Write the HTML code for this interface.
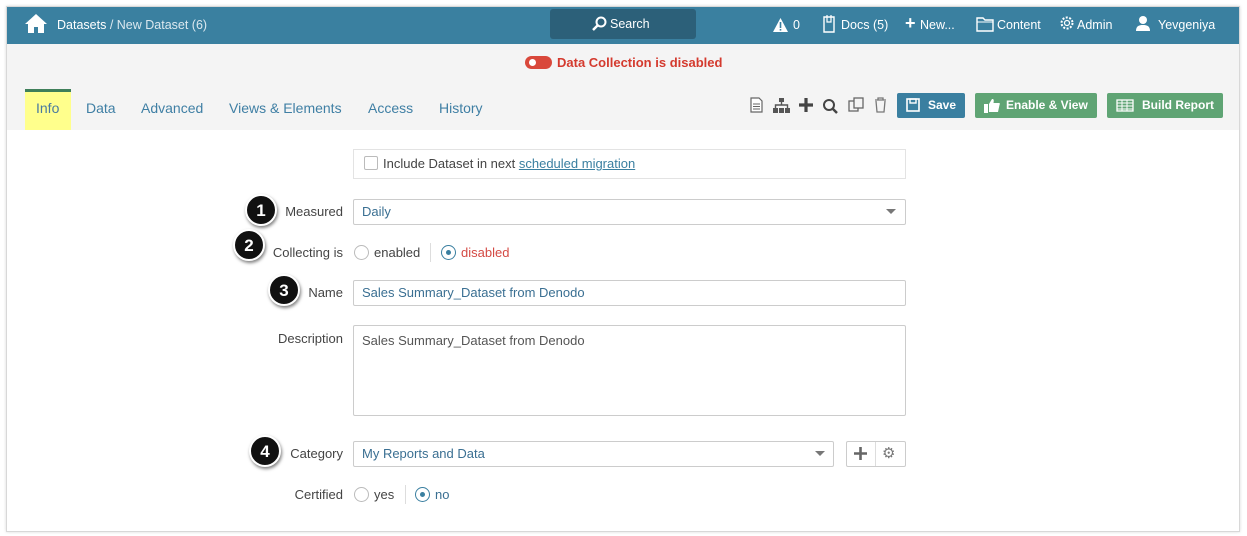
<!DOCTYPE html>
<html><head><meta charset="utf-8"><style>
*{box-sizing:border-box;margin:0;padding:0}
body{width:1247px;height:536px;background:#fff;font-family:"Liberation Sans",sans-serif;font-size:13px;position:relative;overflow:hidden;color:#444}
.frame{position:absolute;left:6px;top:6px;width:1234px;height:526px;border:1px solid #d8d8d8;box-shadow:0 0 3px rgba(0,0,0,.15)}
.top{position:absolute;left:7px;top:7px;width:1232px;height:37px;background:#3a80a0;color:#fff}
.top span{position:absolute;top:11px;font-size:12.5px;white-space:nowrap}
.search{position:absolute;left:543px;top:2px;width:146px;height:30px;background:#2c6079;border-radius:3px}
.gray{position:absolute;left:7px;top:44px;width:1232px;height:86px;background:#f4f4f4}
.a{position:absolute;white-space:nowrap}
.tab{position:absolute;top:100px;font-size:14px;color:#3f7fa4}
.btn{position:absolute;top:93px;height:25px;border-radius:2px;color:#fff;font-weight:bold;font-size:12px;line-height:25px}
.lbl{position:absolute;right:904px;font-size:13px;color:#444;text-align:right}
.inp{position:absolute;left:353px;border:1px solid #ccc;border-radius:2px;background:#fff;color:#3a6f92;font-size:13px;padding-left:8px}
.num{position:absolute;width:32px;height:32px;border-radius:50%;background:#111;color:#fff;font-weight:bold;font-size:17px;text-align:center;line-height:29px;border:2px solid #fff;box-shadow:1px 2px 3px rgba(0,0,0,.5)}
.radio{position:absolute;width:15px;height:15px;border:1px solid #bbb;border-radius:50%;background:#fff}
.radio.on{border-color:#3a7fa0}
.radio.on::after{content:"";position:absolute;left:4px;top:4px;width:5px;height:5px;border-radius:50%;background:#3a7fa0}
.caret{position:absolute;width:0;height:0;border-left:5px solid transparent;border-right:5px solid transparent;border-top:5px solid #777}
</style></head><body>
<div class="frame"></div>
<div class="top">
<svg style="position:absolute;left:17px;top:5px" width="24" height="22" viewBox="0 0 24 22"><path d="M12 2L1 12h3v9h6v-6h4v6h6v-9h3z" fill="#fff"/></svg>
<span style="left:50px">Datasets <span style="position:static;color:#dbe8ef">/ New Dataset (6)</span></span>
<div class="search"><svg style="position:absolute;left:41px;top:7px" width="16" height="16" viewBox="0 0 16 16"><circle cx="10" cy="6" r="4.5" stroke="#fff" stroke-width="2" fill="none"/><path d="M7 9L2 14" stroke="#fff" stroke-width="2.5"/></svg><span style="left:60px;top:8px">Search</span></div>
<svg style="position:absolute;left:765px;top:10px" width="17" height="16" viewBox="0 0 17 16"><path d="M8.5 1L16 15H1z" fill="#fff"/><rect x="7.7" y="5" width="1.6" height="6" fill="#3a80a0"/><rect x="7.7" y="12" width="1.6" height="1.6" fill="#3a80a0"/></svg>
<span style="left:786px">0</span>
<svg style="position:absolute;left:815px;top:7px" width="14" height="20" viewBox="0 0 14 20"><path d="M2 3h10v15H2z" fill="none" stroke="#fff" stroke-width="1.4"/><path d="M5 1v7h4V1" fill="none" stroke="#fff" stroke-width="1.2"/></svg>
<span style="left:834px">Docs (5)</span>
<span style="left:898px;font-size:18px;top:6px;font-weight:bold">+</span><span style="left:913px">New...</span>
<svg style="position:absolute;left:969px;top:9px" width="18" height="16" viewBox="0 0 18 16"><path d="M1 2h6l2 2h8v11H1z" fill="none" stroke="#fff" stroke-width="1.4"/><path d="M1 6h16" stroke="#fff"/></svg>
<span style="left:990px">Content</span>
<svg style="position:absolute;left:1052px;top:8px" width="16" height="16" viewBox="0 0 16 16"><circle cx="8" cy="8" r="5.5" fill="none" stroke="#fff" stroke-width="2" stroke-dasharray="2 1.5"/><circle cx="8" cy="8" r="2.5" fill="none" stroke="#fff" stroke-width="1.2"/></svg>
<span style="left:1070px">Admin</span>
<svg style="position:absolute;left:1128px;top:8px" width="16" height="17" viewBox="0 0 16 17"><circle cx="8" cy="5" r="4" fill="#fff"/><path d="M1 16c0-5 3-6 7-6s7 1 7 6z" fill="#fff"/></svg>
<span style="left:1151px">Yevgeniya</span>
</div>
<div class="gray"></div>
<div class="a" style="left:525px;top:56px;width:27px;height:13px;border-radius:7px;background:#d9483b"></div>
<div class="a" style="left:529px;top:59px;width:7px;height:7px;border-radius:50%;background:#fff"></div>
<div class="a" style="left:557px;top:55px;color:#d43a2e;font-weight:bold;font-size:13px">Data Collection is disabled</div>
<div class="a" style="left:25px;top:89px;width:46px;height:41px;background:#ffff8c;border-top:3px solid #3f7f5a"></div>
<div class="tab" style="left:36px;color:#4a7aa0">Info</div>
<div class="tab" style="left:86px">Data</div>
<div class="tab" style="left:141px">Advanced</div>
<div class="tab" style="left:229px">Views &amp; Elements</div>
<div class="tab" style="left:368px">Access</div>
<div class="tab" style="left:439px">History</div>
<svg style="position:absolute;left:750px;top:97px" width="13" height="16" viewBox="0 0 13 16"><path d="M1 1h8l3 3v11H1z" fill="#fff" stroke="#666" stroke-width="1.2"/><path d="M3 7h7M3 9.5h7M3 12h7" stroke="#666"/></svg>
<svg style="position:absolute;left:773px;top:98px" width="17" height="15" viewBox="0 0 17 15"><rect x="6" y="0" width="5" height="4" fill="#555"/><path d="M8.5 4v3M2.5 10V7h12v3" stroke="#555" stroke-width="1.4" fill="none"/><rect x="0" y="10" width="5" height="5" fill="#555"/><rect x="6" y="10" width="5" height="5" fill="#555"/><rect x="12" y="10" width="5" height="5" fill="#555"/></svg>
<svg style="position:absolute;left:799px;top:98px" width="14" height="14" viewBox="0 0 14 14"><path d="M7 0v14M0 7h14" stroke="#444" stroke-width="3.2"/></svg>
<svg style="position:absolute;left:822px;top:98px" width="16" height="16" viewBox="0 0 16 16"><circle cx="7" cy="7" r="5" stroke="#444" stroke-width="2" fill="none"/><path d="M10.5 10.5L15 15" stroke="#444" stroke-width="2.5"/></svg>
<svg style="position:absolute;left:848px;top:97px" width="16" height="16" viewBox="0 0 16 16"><rect x="1" y="4" width="9" height="10" fill="none" stroke="#666" stroke-width="1.3"/><rect x="6" y="1" width="9" height="10" fill="#f4f4f4" stroke="#666" stroke-width="1.3"/></svg>
<svg style="position:absolute;left:874px;top:97px" width="13" height="16" viewBox="0 0 13 16"><path d="M1 3h11M4 3V1h5v2M2 4l1 11h7l1-11" fill="none" stroke="#777" stroke-width="1.3"/></svg>
<div class="btn" style="left:897px;width:68px;background:#3a7fa0"><svg style="position:absolute;left:9px;top:5px" width="14" height="14" viewBox="0 0 14 14"><rect x="1" y="1" width="12" height="12" fill="none" stroke="#fff" stroke-width="1.6"/><rect x="4" y="1" width="6" height="4" fill="none" stroke="#fff" stroke-width="1.4"/></svg><span style="position:absolute;left:31px">Save</span></div>
<div class="btn" style="left:975px;width:122px;background:#5fa474"><svg style="position:absolute;left:9px;top:5px" width="16" height="15" viewBox="0 0 16 15"><rect x="0" y="6" width="4" height="9" fill="#fff"/><path d="M5 6l3-5c2 0 2 1 1.5 4H15c1 0 1 1 .5 2L14 14H5z" fill="#fff"/></svg><span style="position:absolute;left:31px">Enable &amp; View</span></div>
<div class="btn" style="left:1107px;width:116px;background:#5fa474"><svg style="position:absolute;left:9px;top:6px" width="18" height="13" viewBox="0 0 18 13"><rect x="1" y="1" width="16" height="11" fill="none" stroke="#fff" stroke-width="1.3"/><path d="M1 4h16M1 7h16M1 10h16M6 1v11M11 1v11" stroke="#fff" stroke-width="1"/></svg><span style="position:absolute;left:35px">Build Report</span></div>

<div class="a" style="left:353px;top:149px;width:553px;height:30px;border:1px solid #e3e3e3"></div>
<div class="a" style="left:364px;top:156px;width:14px;height:14px;border:1px solid #bbb;border-radius:2px"></div>
<div class="a" style="left:383px;top:156px;color:#444">Include Dataset in next <span style="color:#3a7fa0;text-decoration:underline">scheduled migration</span></div>

<div class="num" style="left:245px;top:194px">1</div>
<div class="lbl" style="top:204px">Measured</div>
<div class="inp" style="top:199px;width:553px;height:26px;line-height:24px">Daily</div>
<div class="caret" style="left:886px;top:209px"></div>

<div class="num" style="left:233px;top:229px">2</div>
<div class="lbl" style="top:245px">Collecting is</div>
<div class="radio" style="left:354px;top:245px"></div>
<div class="a" style="left:374px;top:245px">enabled</div>
<div class="a" style="left:430px;top:243px;width:1px;height:19px;background:#ddd"></div>
<div class="radio on" style="left:441px;top:245px"></div>
<div class="a" style="left:461px;top:245px;color:#d44a44">disabled</div>

<div class="num" style="left:268px;top:274px">3</div>
<div class="lbl" style="top:285px">Name</div>
<div class="inp" style="top:280px;width:553px;height:26px;line-height:24px">Sales Summary_Dataset from Denodo</div>

<div class="lbl" style="top:331px">Description</div>
<div class="inp" style="top:325px;width:553px;height:91px;padding-top:7px;color:#555">Sales Summary_Dataset from Denodo</div>

<div class="num" style="left:249px;top:435px">4</div>
<div class="lbl" style="top:446px">Category</div>
<div class="inp" style="top:441px;width:481px;height:26px;line-height:24px">My Reports and Data</div>
<div class="caret" style="left:815px;top:451px"></div>
<div class="a" style="left:846px;top:441px;width:60px;height:26px;border:1px solid #ccc;border-radius:2px;background:#fff"></div>
<div class="a" style="left:875px;top:442px;width:1px;height:24px;background:#ddd"></div>
<svg style="position:absolute;left:854px;top:447px" width="13" height="13" viewBox="0 0 13 13"><path d="M6.5 0v13M0 6.5h13" stroke="#666" stroke-width="2.6"/></svg>
<div class="a" style="left:882px;top:444px;font-size:15px;color:#777">⚙</div>

<div class="lbl" style="top:487px">Certified</div>
<div class="radio" style="left:354px;top:487px"></div>
<div class="a" style="left:374px;top:487px">yes</div>
<div class="a" style="left:405px;top:485px;width:1px;height:19px;background:#ddd"></div>
<div class="radio on" style="left:415px;top:487px"></div>
<div class="a" style="left:435px;top:487px;color:#3a6f92">no</div>
</body></html>
